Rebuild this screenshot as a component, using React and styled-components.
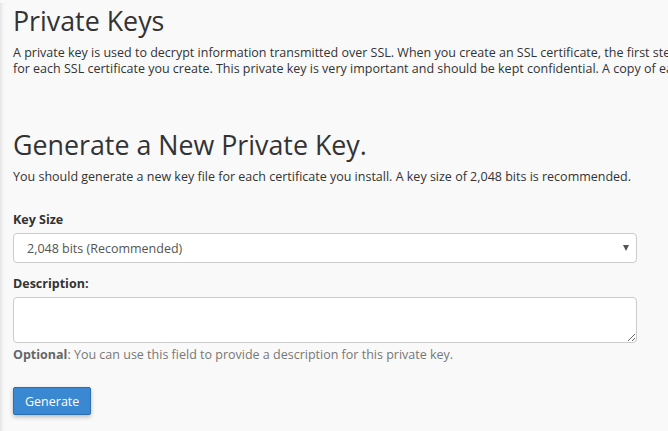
import styled, { createGlobalStyle } from "styled-components"

const GlobalStyle = createGlobalStyle`
    html, body {
        margin : 0;
        padding : 0;
        background : #f9f9f9;
        overflow : hidden;
    }
    body {
        font-family : "Open Sans", "Liberation Sans", sans-serif;
        color : #333333;
    }
`

const Page = styled.div`
    min-height : 431px;
    padding : 0 13px;
    box-sizing : border-box;
    box-shadow : inset 4px 0 4px -3px rgba(0,0,0,.12);
`

const Heading = styled.h1`
    margin : ${props => props.top}px 0 6px 0;
    font-size : 26.8px;
    font-weight : 400;
    line-height : 36px;
    color : #333333;
`

const Intro = styled.p`
    margin : 0;
    width : 900px;
    font-size : 12.5px;
    line-height : 16px;
    white-space : nowrap;
`

const Lead = styled.p`
    margin : 0 0 27px 0;
    font-size : 12.5px;
    line-height : 16px;
`

const Form = styled.form`
    width : 624px;
    display : flex;
    flex-direction : column;
`

const Group = styled.div`
    display : flex;
    flex-direction : column;
    gap : 5px;
    margin-bottom : 13px;
`

const Label = styled.label`
    font-size : 12.5px;
    font-weight : 700;
    line-height : 16px;
`

const SelectBox = styled.div`
    position : relative;
    height : 30px;
    box-sizing : border-box;
    border : 1px solid #cccccc;
    border-radius : 4px;
    background : #ffffff;
    display : flex;
    align-items : center;
    padding : 0 13px;
    font-size : 12.5px;
    color : #555555;
`

const Caret = styled.span`
    position : absolute;
    right : 7px;
    top : 11px;
    width : 0;
    height : 0;
    border-left : 3.5px solid transparent;
    border-right : 3.5px solid transparent;
    border-top : 6px solid #555555;
`

const TextArea = styled.textarea`
    height : 46px;
    box-sizing : border-box;
    border : 1px solid #cccccc;
    border-radius : 4px;
    background : #ffffff;
    font-family : inherit;
    font-size : 12.5px;
    padding : 6px 12px;
`

const Help = styled.div`
    margin-top : -1px;
    font-size : 12.5px;
    line-height : 16px;
    color : #777777;
    b {
        color : #666666;
    }
`

const Button = styled.button`
    align-self : flex-start;
    margin-top : 11px;
    height : 28px;
    padding : 0 11px;
    background : #3a87d2;
    border : 1px solid #2c6fb3;
    border-radius : 2px;
    color : #ffffff;
    font-family : inherit;
    font-size : 12.5px;
    box-shadow : 0 2px 4px rgba(0,0,0,.25);
`

export default function App(){
    return(
        <Page>
            <GlobalStyle/>
            <Heading top={3}>Private Keys</Heading>
            <Intro>
                A private key is used to decrypt information transmitted over SSL. When you create an SSL certificate, the first step is to generate a new private key.
                <br/>
                for each SSL certificate you create. This private key is very important and should be kept confidential. A copy of each private key is stored on the server.
            </Intro>
            <Heading top={50}>Generate a New Private Key.</Heading>
            <Lead>You should generate a new key file for each certificate you install. A key size of 2,048 bits is recommended.</Lead>
            <Form>
                <Group>
                    <Label>Key Size</Label>
                    <SelectBox>
                        2,048 bits (Recommended)
                        <Caret/>
                    </SelectBox>
                </Group>
                <Group>
                    <Label>Description:</Label>
                    <TextArea/>
                    <Help><b>Optional</b>: You can use this field to provide a description for this private key.</Help>
                </Group>
                <Button type="button">Generate</Button>
            </Form>
        </Page>
    )
}
